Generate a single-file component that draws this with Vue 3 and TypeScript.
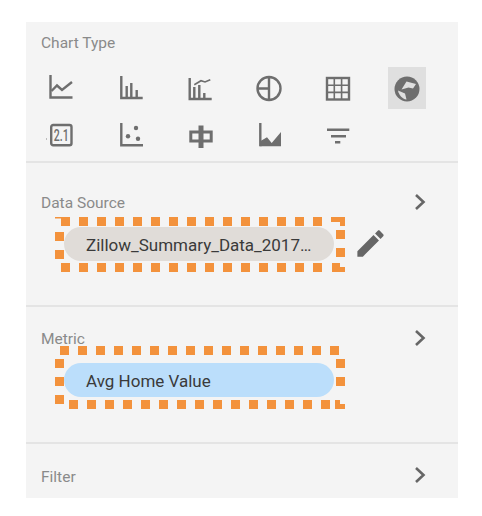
<script setup lang="ts">
const dataSourceName = 'Zillow_Summary_Data_2017…'
const metricName = 'Avg Home Value'
</script>

<template>
  <div class="panel">
    <section class="sec chart-type">
      <div class="label">Chart Type</div>
      <div class="icons">
        <div class="cell">
          <svg class="ic" viewBox="0 0 24 24">
            <path class="st" d="M1.5 -1V21.5H23.5" />
            <path class="st" d="M2.5 15L8 9.5L13 14L23 6" />
          </svg>
        </div>
        <div class="cell">
          <svg class="ic" viewBox="0 0 24 24">
            <path class="st" d="M3.3 0V22H24.7" />
            <path class="st" d="M8.7 22V10M13.3 22V7M18.7 22V14" />
          </svg>
        </div>
        <div class="cell">
          <svg class="ic" viewBox="0 0 24 24">
            <path class="st" d="M2.7 2V23H24.7" />
            <path class="st" d="M7.3 23V11M12.3 23V9M17.3 23V17" />
            <path class="st thin" d="M7.3 8.7L14 4.7L18 6L23.3 3.7" />
          </svg>
        </div>
        <div class="cell">
          <svg class="ic" viewBox="0 0 24 24">
            <circle class="st" cx="12" cy="12.5" r="11.5" />
            <path class="st" d="M12 1V24M0.5 12.5H12" />
          </svg>
        </div>
        <div class="cell">
          <svg class="ic" viewBox="0 0 24 24">
            <rect class="st" x="1" y="2" width="22" height="21.5" />
            <path class="st thin" d="M8.3 2V23.5M15.6 2V23.5M1 9.2H23M1 16.4H23" />
          </svg>
        </div>
        <div class="cell">
          <div class="selected">
            <svg class="ic globe" viewBox="0 0 24 24">
              <circle class="fill" cx="12" cy="12" r="12.5" />
              <path class="cut" d="M11.5 4.5L21 7L18 11.5L13.5 10.5L6.5 12.5Z" />
              <path class="cut" d="M3 13.5L10 16.5L11.5 22.5C7 22 4 18 3 13.5Z" />
            </svg>
          </div>
        </div>
        <div class="cell">
          <span class="speck"></span>
          <svg class="ic" viewBox="0 0 24 24">
            <rect class="st" x="2.2" y="2" width="20.3" height="20.3" rx="2" />
            <text class="score" x="12.3" y="18.2" text-anchor="middle" textLength="15" lengthAdjust="spacingAndGlyphs">2.1</text>
          </svg>
        </div>
        <div class="cell">
          <svg class="ic" viewBox="0 0 24 24">
            <path class="st" d="M3.3 0V22.3H25" />
            <circle class="fill" cx="10" cy="13.3" r="2.2" />
            <circle class="fill" cx="18" cy="5" r="2.2" />
            <circle class="fill" cx="20" cy="15.7" r="2.2" />
          </svg>
        </div>
        <div class="cell">
          <svg class="ic" viewBox="0 0 24 24">
            <rect class="st thick" x="3.8" y="9" width="20.4" height="9" />
            <rect class="fill" x="11.5" y="2.5" width="5" height="22.5" />
          </svg>
        </div>
        <div class="cell">
          <svg class="ic" viewBox="0 0 24 24">
            <path class="st" d="M3.3 0V23.3" />
            <path class="fill" d="M3.3 17L4 17.7L10 14.3L14.7 20L24 9V23.3H3.3Z" />
          </svg>
        </div>
        <div class="cell">
          <svg class="ic" viewBox="0 0 24 24">
            <path class="st" d="M1 6.7H23.3M5 13.3H20M9 19.3H14.3" />
          </svg>
        </div>
      </div>
    </section>

    <section class="sec source">
      <div class="head">
        <span class="label">Data Source</span>
        <svg class="chev" viewBox="0 0 12 18"><path d="M2 2L9.5 9L2 16" /></svg>
      </div>
      <div class="pill-row">
        <div class="dash-box source-box">
          <div class="pill grey">{{ dataSourceName }}</div>
          <svg class="dashes" width="290" height="55">
            <path d="M6 4.5H276" />
            <path d="M6 50.5H276" />
            <path d="M4.5 15V43" />
            <path d="M285.5 13V40" />
            <path class="solid" d="M0 0H6V1.5H0Z" />
            <path class="solid" d="M276 0H290V9H285V5H276Z" />
            <path class="solid" d="M277 46H285V50H290V55H277Z" />
          </svg>
        </div>
        <svg class="pencil" viewBox="0 0 24 24">
          <path d="M3 17.25V21h3.75L17.81 9.94l-3.75-3.75L3 17.25zM20.71 7.04c.39-.39.39-1.02 0-1.41l-2.34-2.34c-.39-.39-1.02-.39-1.41 0l-1.83 1.83 3.75 3.75 1.83-1.83z" />
        </svg>
      </div>
    </section>

    <section class="sec metric">
      <div class="head">
        <span class="label">Metric</span>
        <svg class="chev" viewBox="0 0 12 18"><path d="M2 2L9.5 9L2 16" /></svg>
      </div>
      <div class="dash-box metric-box">
        <div class="pill blue">{{ metricName }}</div>
        <svg class="dashes" width="290" height="63">
          <path d="M5 4.5H290" />
          <path d="M14 58.5H284" />
          <path d="M4.5 13V58" />
          <path d="M285.5 13V49" />
          <path class="solid" d="M280 54H285V58H290V63H280Z" />
        </svg>
      </div>
    </section>

    <section class="sec filter">
      <div class="head">
        <span class="label">Filter</span>
        <svg class="chev" viewBox="0 0 12 18"><path d="M2 2L9.5 9L2 16" /></svg>
      </div>
    </section>
  </div>
</template>

<style scoped>
.panel {
  margin: 22px 24px 18px 26px;
  width: 432px;
  height: 476px;
  background: #f4f4f4;
  font-family: Roboto, "Liberation Sans", sans-serif;
  overflow: hidden;
}
.sec { box-sizing: border-box; border-bottom: 2px solid #e4e4e4; }
.chart-type { height: 141px; padding-top: 11px; }
.source { height: 144px; padding-top: 30px; }
.metric { height: 137px; padding-top: 22px; }
.filter { height: 54px; padding-top: 23px; border-bottom: 0; }

.label {
  display: block;
  padding-left: 15px;
  font-size: 15.5px;
  line-height: 20px;
  color: #8a8a8a;
}
.head {
  display: flex;
  justify-content: space-between;
  align-items: center;
  height: 20px;
}
.chev {
  width: 12px;
  height: 18px;
  margin: -2px 32px 0 0;
  fill: none;
  stroke: #666;
  stroke-width: 2.6;
}
.filter .chev { margin-top: -4px; }

.icons {
  display: grid;
  grid-template-columns: repeat(6, 69.2px);
  grid-auto-rows: 47px;
  margin-top: 11px;
  padding-left: 0.4px;
}
.cell {
  position: relative;
  display: flex;
  align-items: center;
  justify-content: center;
}
.ic { width: 24px; height: 24px; overflow: visible; }
.st { fill: none; stroke: #6e6e6e; stroke-width: 2.4; }
.thin { stroke-width: 1.6; }
.thick { stroke-width: 3; }
.fill { fill: #6e6e6e; }
.cut { fill: #dfdfdf; }
.selected {
  display: flex;
  align-items: center;
  justify-content: center;
  width: 38px;
  height: 42px;
  background: #dfdfdf;
}
.globe { margin-top: 3px; }
.score {
  font-family: Roboto, "Liberation Sans", sans-serif;
  font-size: 17px;
  font-weight: 500;
  fill: #6e6e6e;
}
.speck {
  position: absolute;
  left: 20px;
  top: 27px;
  width: 1px;
  height: 2px;
  background: #bbb;
}

.pill-row {
  display: flex;
  align-items: center;
  gap: 8px;
  margin: 4px 0 0 29px;
}
.dash-box { position: relative; box-sizing: border-box; width: 290px; padding-left: 9px; }
.source-box { height: 55px; padding-top: 10px; }
.metric-box { height: 63px; padding-top: 17px; margin: -3px 0 0 29px; }
.pill {
  box-sizing: border-box;
  width: 270px;
  height: 34px;
  padding: 1px 0 0 22px;
  border-radius: 17px;
  font-size: 17px;
  line-height: 34px;
  color: #3a3a3a;
  white-space: nowrap;
}
.grey { background: #e0dcd8; }
.blue { background: #bbdefb; }
.dashes {
  position: absolute;
  left: 0;
  top: 0;
  fill: none;
  stroke: #f3923c;
  stroke-width: 9;
  stroke-dasharray: 9 9;
}
.dashes .solid { fill: #f3923c; stroke: none; }
.pencil { width: 35px; height: 35px; margin-top: -3px; fill: #666; }
</style>

<style>
body { background: #fff; }
</style>
